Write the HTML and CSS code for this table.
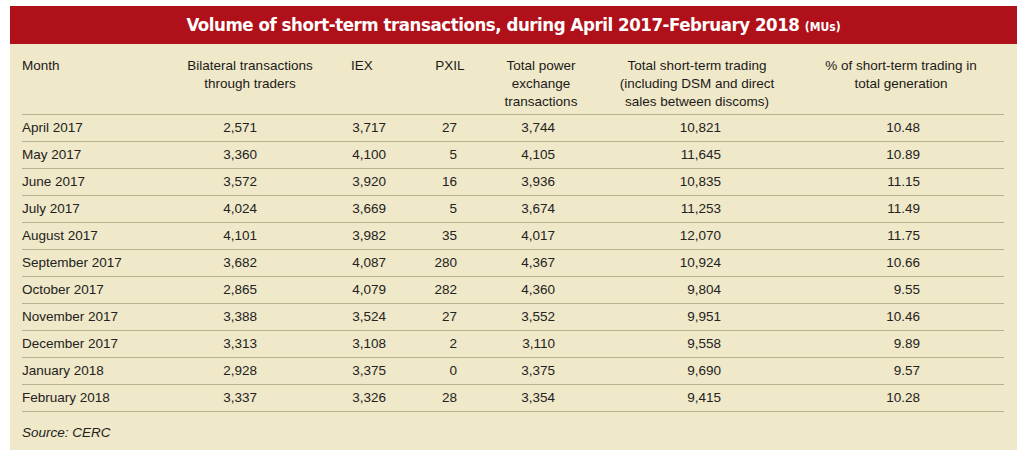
FILE: index.html
```html
<!DOCTYPE html>
<html lang="en">
<head>
<meta charset="utf-8">
<title>Volume of short-term transactions</title>
<link rel="stylesheet" href="styles.css">
</head>
<body>
<div class="panel">
  <div class="title">Volume of short-term transactions, during April 2017-February 2018 <span class="unit">(MUs)</span></div>
  <div class="body">
    <div class="row head">
      <div class="c month">Month</div>
      <div class="c">Bilateral transactions<br>through traders</div>
      <div class="c">IEX</div>
      <div class="c">PXIL</div>
      <div class="c">Total power<br>exchange<br>transactions</div>
      <div class="c">Total short-term trading<br>(including DSM and direct<br>sales between discoms)</div>
      <div class="c pct">% of short-term trading in<br>total generation</div>
    </div>
    <div class="row"><div class="c month">April 2017</div><div class="c n1">2,571</div><div class="c n2">3,717</div><div class="c n3">27</div><div class="c n4">3,744</div><div class="c n5">10,821</div><div class="c n6">10.48</div></div>
    <div class="row"><div class="c month">May 2017</div><div class="c n1">3,360</div><div class="c n2">4,100</div><div class="c n3">5</div><div class="c n4">4,105</div><div class="c n5">11,645</div><div class="c n6">10.89</div></div>
    <div class="row"><div class="c month">June 2017</div><div class="c n1">3,572</div><div class="c n2">3,920</div><div class="c n3">16</div><div class="c n4">3,936</div><div class="c n5">10,835</div><div class="c n6">11.15</div></div>
    <div class="row"><div class="c month">July 2017</div><div class="c n1">4,024</div><div class="c n2">3,669</div><div class="c n3">5</div><div class="c n4">3,674</div><div class="c n5">11,253</div><div class="c n6">11.49</div></div>
    <div class="row"><div class="c month">August 2017</div><div class="c n1">4,101</div><div class="c n2">3,982</div><div class="c n3">35</div><div class="c n4">4,017</div><div class="c n5">12,070</div><div class="c n6">11.75</div></div>
    <div class="row"><div class="c month">September 2017</div><div class="c n1">3,682</div><div class="c n2">4,087</div><div class="c n3">280</div><div class="c n4">4,367</div><div class="c n5">10,924</div><div class="c n6">10.66</div></div>
    <div class="row"><div class="c month">October 2017</div><div class="c n1">2,865</div><div class="c n2">4,079</div><div class="c n3">282</div><div class="c n4">4,360</div><div class="c n5">9,804</div><div class="c n6">9.55</div></div>
    <div class="row"><div class="c month">November 2017</div><div class="c n1">3,388</div><div class="c n2">3,524</div><div class="c n3">27</div><div class="c n4">3,552</div><div class="c n5">9,951</div><div class="c n6">10.46</div></div>
    <div class="row"><div class="c month">December 2017</div><div class="c n1">3,313</div><div class="c n2">3,108</div><div class="c n3">2</div><div class="c n4">3,110</div><div class="c n5">9,558</div><div class="c n6">9.89</div></div>
    <div class="row"><div class="c month">January 2018</div><div class="c n1">2,928</div><div class="c n2">3,375</div><div class="c n3">0</div><div class="c n4">3,375</div><div class="c n5">9,690</div><div class="c n6">9.57</div></div>
    <div class="row"><div class="c month">February 2018</div><div class="c n1">3,337</div><div class="c n2">3,326</div><div class="c n3">28</div><div class="c n4">3,354</div><div class="c n5">9,415</div><div class="c n6">10.28</div></div>
    <div class="source">Source: CERC</div>
  </div>
</div>
</body>
</html>
```

FILE: styles.css
```css
html, body {
  margin: 0;
  padding: 0;
  background: #ffffff;
}

.panel {
  margin: 6px 0 0 10px;
  width: 1007px;
  height: 444px;
  background: #efe8c9;
  font-family: "Liberation Sans", Arial, sans-serif;
  color: #232220;
}

.title {
  height: 38px;
  background: #b01019;
  color: #ffffff;
  font-family: "DejaVu Sans Condensed", "Liberation Sans", sans-serif;
  font-weight: bold;
  font-size: 18.5px;
  letter-spacing: -0.45px;
  line-height: 38px;
  text-align: center;
}

.title .unit {
  font-size: 12px;
  letter-spacing: 0;
}

.body {
  padding: 0 13px 0 12px;
}

.row {
  display: grid;
  grid-template-columns: 158px 140px 84px 92px 90px 222px 196px;
  height: 26px;
  align-items: center;
  border-bottom: 1px solid #b9b18e;
  font-size: 13.5px;
  line-height: 18px;
}

.row.head {
  height: 57px;
  padding-top: 13px;
  align-items: start;
  text-align: center;
  color: #1b1a18;
}

.row.head .month {
  text-align: left;
}

.row.head .pct {
  padding-right: 10px;
}

.c {
  white-space: nowrap;
}

.n1, .n2, .n3, .n4, .n5, .n6 {
  text-align: right;
}

.n1 { padding-right: 63px; }
.n2 { padding-right: 18px; }
.n3 { padding-right: 39px; }
.n4 { padding-right: 31px; }
.n5 { padding-right: 87px; }
.n6 { padding-right: 84px; }

.source {
  padding-top: 12px;
  font-size: 13.5px;
  line-height: 18px;
  font-style: italic;
}
```
